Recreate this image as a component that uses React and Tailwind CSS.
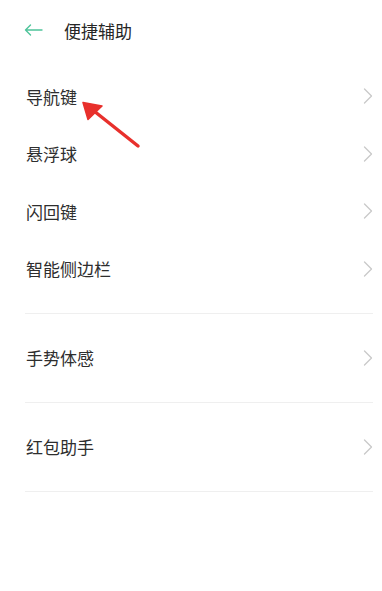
const topItems = ["导航键", "悬浮球", "闪回键", "智能侧边栏"];
const groups = ["手势体感", "红包助手"];

function Chevron() {
  return (
    <svg width="10" height="16" viewBox="0 0 10 16" fill="none" className="shrink-0">
      <path d="M1.5 1 L8.5 8 L1.5 15" stroke="#c9c9c9" strokeWidth="1.3" strokeLinejoin="round" strokeLinecap="round" />
    </svg>
  );
}

function Row({ label, className }) {
  return (
    <div className={`flex items-center justify-between ${className}`}>
      <span className="text-[17px] leading-none text-[#2e2e2e]">{label}</span>
      <Chevron />
    </div>
  );
}

export default function App() {
  return (
    <div className="relative h-[591px] w-[382px] overflow-hidden bg-white font-['Noto_Sans_CJK_SC','Noto_Sans',sans-serif]">
      <header className="flex h-[60px] items-center pl-6">
        <svg width="19" height="12" viewBox="0 0 19 12" fill="none">
          <path d="M18 6 H1.5 M6.5 1 L1.5 6 L6.5 11" stroke="#4fc49b" strokeWidth="1.4" strokeLinecap="round" strokeLinejoin="round" />
        </svg>
        <h1 className="ml-[21px] text-[17px] leading-none font-normal text-[#262626]">便捷辅助</h1>
      </header>

      <div className="pl-[26px] pr-[9px] pt-[7.5px]">
        {topItems.map((item) => (
          <Row key={item} label={item} className="h-[57.5px]" />
        ))}
      </div>

      <div className="mt-[15px] ml-[25px] mr-[9px] border-t border-[#efefef]">
        {groups.map((item) => (
          <div key={item} className="border-b border-[#efefef]">
            <Row label={item} className="h-[88px] pl-px" />
          </div>
        ))}
      </div>

      <svg className="absolute left-0 top-0" width="382" height="591" viewBox="0 0 382 591" fill="none">
        <path d="M138 146 L94 111" stroke="#e8302c" strokeWidth="3.5" strokeLinecap="round" />
        <path d="M83 102.5 L102 106 L88 119.5 Z" fill="#e8302c" stroke="#e8302c" strokeWidth="1.5" strokeLinejoin="round" />
      </svg>
    </div>
  );
}
